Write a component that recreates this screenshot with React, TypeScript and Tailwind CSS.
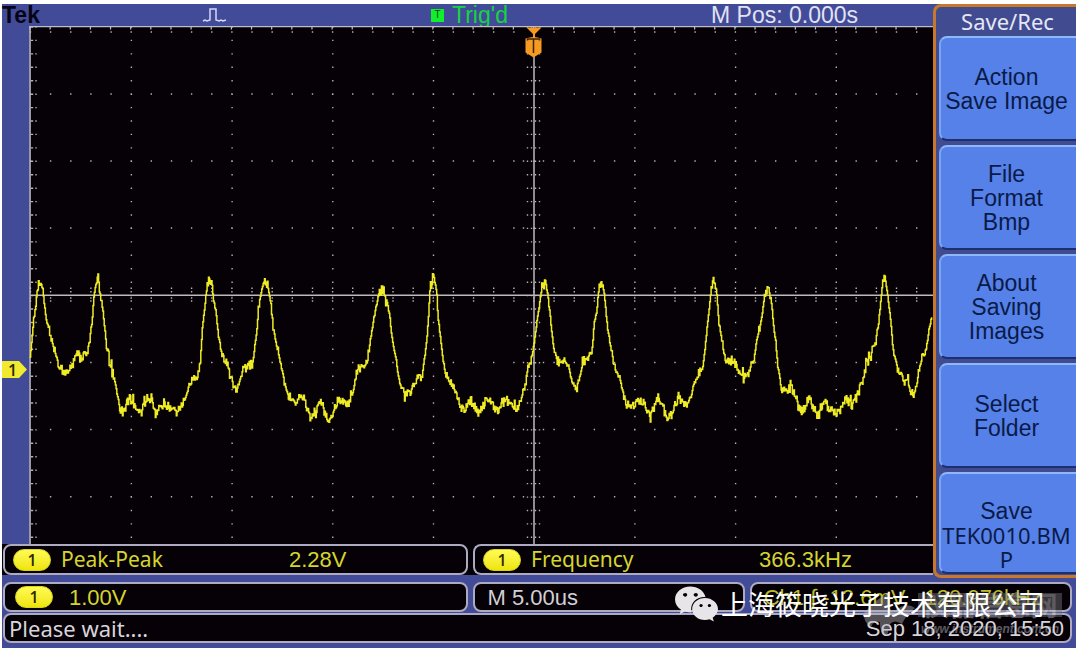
import React from 'react';
import { FaWeixin } from 'react-icons/fa';

const range = (n: number) => Array.from({ length: n }, (_, i) => i);

// Key points of the channel 1 trace, in thirds of a plot unit, per capture segment.
const segments: { x0: number; points: number[] }[] = [
  {
    x0: 0,
    points: [
      90, 320, 95, 265, 100, 210, 107, 170, 110, 120, 115, 105, 120, 97, 127, 105, 132, 160, 138, 205, 146, 240, 155, 270,
      162, 305, 170, 330, 180, 350, 190, 370, 205, 360, 215, 355, 225, 325, 232, 310, 240, 325, 250, 320, 262, 300, 270, 255,
      276, 210, 282, 130, 288, 100, 295, 90, 300, 130, 308, 180, 314, 240, 320, 305, 330, 345, 342, 380, 350, 430, 360, 475,
      372, 492, 382, 455, 390, 445, 400, 460, 412, 485, 425, 485, 435, 455, 445, 440, 455, 455, 468, 490, 480, 475, 490, 460,
      502, 465, 515, 480, 530, 485, 545, 465, 555, 450, 565, 410, 575, 395, 590, 380, 600, 345, 606, 240, 613, 180, 620, 110,
      628, 85, 635, 100, 640, 150, 647, 185, 655, 260, 665, 310, 680, 340, 690, 380, 705, 410, 712, 420, 722, 380, 730, 355,
      745, 350, 757, 340, 765, 280, 772, 210, 780, 140, 788, 105, 795, 90, 803, 110, 812, 160, 820, 240, 832, 300, 845, 360,
      855, 405, 865, 445, 880, 460,
    ],
  },
  {
    x0: 870,
    points: [
      15, 465, 28, 445, 42, 440, 52, 475, 65, 500, 78, 480, 90, 450, 103, 485, 117, 510, 130, 490, 140, 455, 150, 440,
      165, 462, 178, 460, 188, 430, 195, 385, 207, 350, 215, 360, 232, 335, 240, 270, 250, 210, 258, 170, 264, 135, 270, 122,
      280, 120, 288, 150, 298, 190, 305, 260, 318, 330, 325, 380, 333, 415, 345, 435, 360, 430, 372, 400, 385, 375, 395, 385,
      402, 330, 410, 270, 416, 180, 420, 105, 430, 78, 438, 115, 444, 210, 450, 255, 458, 330, 467, 375, 475, 395, 488, 398,
      498, 430, 508, 465, 520, 485, 532, 465, 541, 450, 552, 470, 567, 492, 582, 460, 595, 445, 610, 468, 625, 482, 640, 460,
      648, 445, 660, 465, 675, 475, 690, 460, 702, 420, 712, 360, 722, 330, 730, 290, 740, 215, 750, 150, 757, 105, 765, 85,
      772, 130, 780, 200, 790, 290, 800, 330, 812, 345, 825, 325, 835, 350,
    ],
  },
  {
    x0: 1710,
    points: [
      8, 405, 18, 420, 30, 370, 40, 335, 55, 325, 65, 310, 72, 220, 80, 180, 86, 110, 93, 95, 101, 120, 107, 185,
      115, 250, 124, 310, 135, 350, 148, 380, 158, 430, 175, 470, 195, 465, 212, 450, 225, 460, 240, 505, 253, 465, 266, 440,
      280, 475, 292, 500, 310, 480, 326, 435, 340, 455, 352, 470, 362, 440, 370, 400, 385, 365, 395, 370, 402, 320, 410, 240,
      418, 165, 424, 105, 431, 92, 440, 130, 446, 220, 458, 280, 468, 340, 480, 322, 495, 340, 508, 370, 520, 382, 532, 385,
      542, 350, 553, 315, 562, 260, 573, 215, 582, 140, 592, 112, 602, 145, 611, 230, 622, 340, 633, 415, 650, 425, 662, 410,
      675, 440, 692, 485, 705, 465, 717, 440, 728, 470, 742, 495, 755, 475, 768, 458, 780, 480, 798, 490, 812, 475, 825, 450,
      845, 465, 860, 440, 875, 400, 888, 350, 902, 310, 917, 265, 925, 220, 932, 150, 937, 95, 943, 75, 950, 115, 960, 200,
      968, 290, 980, 350, 995, 385, 1010, 390, 1020, 420, 1030, 440, 1040, 400, 1050, 340, 1060, 305, 1068, 300, 1076, 240,
      1086, 195,
    ],
  },
];

function buildTrace(): string {
  const pts: [number, number][] = [];
  for (const s of segments) {
    for (let i = 0; i < s.points.length; i += 2) {
      pts.push([(s.x0 + s.points[i]) / 3, 250 + s.points[i + 1] / 3]);
    }
  }
  let seed = 7;
  const random = () => {
    seed = (seed * 1103515245 + 12345) % 2147483648;
    return seed / 2147483648 - 0.5;
  };
  let d = `M${pts[0][0]} ${pts[0][1]}`;
  let k = 0;
  for (let x = pts[0][0]; x < pts[pts.length - 1][0]; x += 0.7) {
    while (k < pts.length - 2 && pts[k + 1][0] < x) k++;
    const [ax, ay] = pts[k];
    const [bx, by] = pts[k + 1];
    const y = ay + ((by - ay) * (x - ax)) / (bx - ax);
    const slope = Math.abs((by - ay) / (bx - ax));
    const noise = random() * (slope > 4 ? 3 : 9) + (random() > 0.42 ? 3 : 0) - (random() > 0.45 ? 5 : 0);
    d += `H${x.toFixed(1)}V${(y + noise).toFixed(1)}`;
  }
  return d;
}

const trace = buildTrace();
const minorX = range(45).map((i) => 30 + i * 20.14);
const minorY = range(39).map((i) => 27 + i * 13.43);
const majorX = [130.9, 231.6, 332.3, 433, 634.4, 735.1, 835.8];
const majorY = [94, 161, 228, 362.5, 429.5, 496.7];

function dots(xs: number[], ys: number[]): string {
  return xs.map((x) => ys.map((y) => `M${(x - 0.2).toFixed(1)} ${y.toFixed(1)}h1.4`).join('')).join('');
}

const graticule =
  dots(majorX, minorY) +
  dots(minorX, majorY) +
  dots([527, 531, 535, 539], minorY) +
  dots([523, 543], majorY) +
  dots(minorX, [288.3, 291.7, 298, 301, 32]) +
  dots([31, 32, 35.5], minorY);

function Plot() {
  return (
    <svg viewBox="29 26 904 518" preserveAspectRatio="none" className="block min-w-0 flex-1 bg-[#050106]" role="img" aria-label="Channel 1 waveform">
      <path d={graticule} stroke="#b4b1b6" strokeWidth="1.4" fill="none" />
      <path d={minorX.map((x) => `M${x} 26v3.5`).join('')} stroke="#c4c0c8" strokeWidth="1.2" />
      <path d="M30 545V26.5H933" stroke="#c0bcc8" strokeWidth="1.6" fill="none" />
      <path d="M30 295.3H933M534 30V545" stroke="#bdb9bc" strokeWidth="1.5" />
      <path d={trace} stroke="#efec26" strokeWidth="1.5" fill="none" />
      <path d="M526.5 27.5h15L534 35z" fill="#f79a22" />
      <path d="M534 34v4" stroke="#f79a22" strokeWidth="2" />
      <path d="M525.5 38.5q8.5-3 16 0v14l-8 5-8-5z" fill="#f79a22" />
      <path d="M527.5 40.500v-1.500h12v1.500M533.5 39v14" stroke="#3a2508" strokeWidth="1.5" fill="none" />
    </svg>
  );
}

function ChannelBadge() {
  return (
    <span className="flex h-[22px] w-[38px] shrink-0 items-center justify-center rounded-full border border-[#d8d420] bg-linear-to-b from-[#fffb50] to-[#efe500] font-['Open_Sans',sans-serif] text-base font-semibold text-[#2a2600]">
      1
    </span>
  );
}

const box = 'flex min-w-0 items-center rounded-lg border-2 border-[#aeaac0] bg-[#050106] whitespace-nowrap';

function Measurement({ name, value, className }: { name: string; value: string; className: string }) {
  return (
    <div className={`${box} h-[31px] ${className} pl-2`}>
      <ChannelBadge />
      <span className="w-[238px] pl-2.5 font-['Noto_Sans',sans-serif] text-[21px]">{name}</span>
      <span>{value}</span>
    </div>
  );
}

const menu = [
  ['Action', 'Save Image'],
  ['File', 'Format', 'Bmp'],
  ['About', 'Saving', 'Images'],
  ['Select', 'Folder'],
];

const menuButton =
  'block w-full rounded-l-lg border-t-2 border-b-2 border-l-2 border-t-[#8fb8fa] border-b-[#1c2f70] border-l-[#78a6f6] bg-[#5581e8] pr-1 text-center text-[23px] leading-6 text-[#0a1a48]';

export default function App() {
  return (
    <div className="bg-white pt-1 pr-1 pb-1 pl-0.5 font-['Liberation_Sans',sans-serif]">
      <main className="bg-[#414b97] pb-[5px]">
        <div className="flex">
          <div className="flex min-w-0 flex-1 flex-col pb-[3px]">
            <header className="flex h-[22px] items-center text-[23px] leading-[22px] whitespace-nowrap text-[#e2e2f4]">
              <h1 className="w-[200px] font-bold text-[#060414]">Tek</h1>
              <svg viewBox="0 0 26 16" className="h-4 w-[26px]" aria-hidden="true">
                <path d="M1 14l2-1 2 1 3-1V2h6v11l3 1 2-1 2 1 3-1" stroke="#d4d8fa" strokeWidth="1.5" fill="none" />
              </svg>
              <div className="ml-[203px] flex w-[280px] items-center gap-2 text-[#19d243]">
                <span className="flex h-[13px] w-[13px] items-center justify-center bg-[#12ee2b] text-[10px] leading-3 text-[#0b4a16]">T</span>
                <span>Trig'd</span>
              </div>
              <span>M Pos: 0.000s</span>
            </header>
            <div className="flex flex-1">
              <div className="w-[27px] pt-[335px]">
                <div className="flex h-[17px] w-[25px] items-center bg-[#f2ea2e] pl-1.5 font-['Open_Sans',sans-serif] text-base leading-4 font-semibold text-[#2a2600] [clip-path:polygon(0_0,68%_0,100%_50%,68%_100%,0_100%)]">
                  1
                </div>
              </div>
              <Plot />
            </div>
            <div className="flex gap-[5px] bg-[#050106] pl-px text-[22px] text-[#d5d52d]">
              <Measurement name="Peak-Peak" value="2.28V" className="w-1/2" />
              <Measurement name="Frequency" value="366.3kHz" className="flex-1 rounded-r-none border-r-0" />
            </div>
          </div>
          <aside className="w-[143px] shrink-0 rounded-l-lg border-y-3 border-l-3 border-[#c8782a] bg-[#414b8f] pl-[3px] text-center">
            <h2 className="h-[29px] font-['Noto_Sans',sans-serif] text-[22px] leading-7 text-[#e6e6f6]">Save/Rec</h2>
            <nav className="flex flex-col gap-1">
              {menu.map((lines) => (
                <button key={lines[0]} type="button" className={`${menuButton} h-[105px]`}>
                  {lines.map((line) => (
                    <span key={line} className="block">{line}</span>
                  ))}
                </button>
              ))}
              <button type="button" className={`${menuButton} h-[102px] pt-6`}>
                <span className="block">Save</span>
                <span className="block font-['Noto_Sans',sans-serif] text-[22px]">TEK0010.BM</span>
                <span className="block font-['Noto_Sans',sans-serif] text-[22px]">P</span>
              </button>
            </nav>
          </aside>
        </div>
        <footer className="relative pt-1 pr-1 pl-px text-[22px]">
          <div className="grid grid-cols-[465fr_271fr_322fr] gap-[5px]">
            <div className={`${box} h-[30px] gap-4 pl-2.5 text-[#d5d52d]`}>
              <ChannelBadge />
              <span>1.00V</span>
            </div>
            <div className={`${box} h-[30px] pl-3 text-[#d2cfd4]`}>M 5.00us</div>
            <div className={`${box} h-[30px] justify-between pr-7 pl-3 text-[#bcbc2a]`}>
              <span>Ch1 ∫ -12.6mV</span>
              <span>120.976kHz</span>
            </div>
          </div>
          <div className={`${box} mt-px h-[30px] justify-between pr-1.5 pl-1 text-[#d8d5da]`}>
            <span className="font-['Noto_Sans',sans-serif]">Please wait....</span>
            <time>Sep 18, 2020, 15:50</time>
          </div>
          <div className="pointer-events-none absolute top-[15px] right-3.5 flex items-start gap-0.5 text-[#c8c8d0] opacity-45" aria-hidden="true">
            <svg viewBox="0 0 54 44" className="h-11 w-[54px]">
              <path d="M2 20Q18 2 27 1q-2 14 4 18Q44 8 53 15 44 22 40 31q-8-5-12 0l-3 12q-8-2-7-14-6-2-9 5-8-5-7-14z" fill="#b4b4b8" />
            </svg>
            <div className="flex w-36 flex-col items-center">
              <span className="w-full bg-[#77777f] text-center font-['Noto_Sans_CJK_SC',sans-serif] text-[27px] leading-6 font-bold">仪器信息网</span>
              <span className="text-xs leading-6 font-bold italic">www.instrument.com.cn</span>
            </div>
          </div>
          <div className="pointer-events-none absolute top-1 right-[31px] flex items-center gap-0.5 text-white">
            <FaWeixin className="h-11 w-[45px] text-[#e8e5e8]" aria-hidden="true" />
            <span className="font-['Noto_Sans_CJK_SC',sans-serif] text-[27px] leading-9 whitespace-nowrap">上海筱晓光子技术有限公司</span>
          </div>
        </footer>
      </main>
    </div>
  );
}
